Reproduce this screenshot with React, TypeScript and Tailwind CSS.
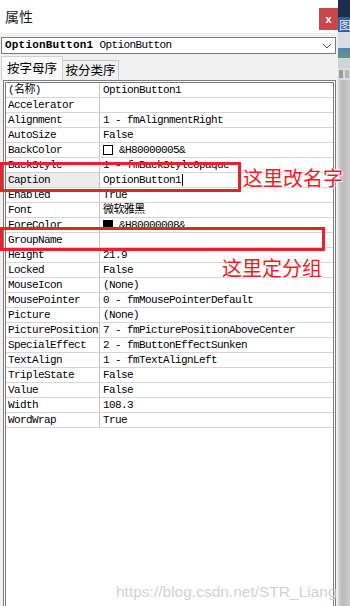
import { ReactElement } from 'react';

type Row = { name: string; value: string; swatch?: 'white' | 'black'; selected?: boolean };

const rows: Row[] = [
  { name: '(名称)', value: 'OptionButton1' },
  { name: 'Accelerator', value: '' },
  { name: 'Alignment', value: '1 - fmAlignmentRight' },
  { name: 'AutoSize', value: 'False' },
  { name: 'BackColor', value: '&H80000005&', swatch: 'white' },
  { name: 'BackStyle', value: '1 - fmBackStyleOpaque' },
  { name: 'Caption', value: 'OptionButton1', selected: true },
  { name: 'Enabled', value: 'True' },
  { name: 'Font', value: '微软雅黑' },
  { name: 'ForeColor', value: '&H80000008&', swatch: 'black' },
  { name: 'GroupName', value: '' },
  { name: 'Height', value: '21.9' },
  { name: 'Locked', value: 'False' },
  { name: 'MouseIcon', value: '(None)' },
  { name: 'MousePointer', value: '0 - fmMousePointerDefault' },
  { name: 'Picture', value: '(None)' },
  { name: 'PicturePosition', value: '7 - fmPicturePositionAboveCenter' },
  { name: 'SpecialEffect', value: '2 - fmButtonEffectSunken' },
  { name: 'TextAlign', value: '1 - fmTextAlignLeft' },
  { name: 'TripleState', value: 'False' },
  { name: 'Value', value: 'False' },
  { name: 'Width', value: '108.3' },
  { name: 'WordWrap', value: 'True' },
];

const mono = "font-['Liberation_Mono','Noto_Sans_CJK_SC',monospace] text-[11px] tracking-[-0.6px]";

function PropRow({ row }: { row: Row }): ReactElement {
  return (
    <div className="flex h-[15px] border-b border-[#d6d6d6] leading-[14px] text-black">
      <div
        className={`w-[94px] shrink-0 border-r border-[#c4c4c4] pl-[2px] ${mono} ${
          row.selected ? 'bg-[#ececec]' : ''
        }`}
      >
        {row.name}
      </div>
      <div className={`flex flex-1 items-center pl-[3px] ${mono}`}>
        {row.swatch && (
          <span
            className={`mr-[6px] inline-block h-[10px] w-[10px] border border-black ${
              row.swatch === 'black' ? 'bg-black' : 'bg-white'
            }`}
          />
        )}
        <span>{row.value}</span>
        {row.selected && <span className="ml-[1px] inline-block h-[12px] w-px bg-black" />}
      </div>
    </div>
  );
}

export default function App(): ReactElement {
  return (
    <div className="relative flex h-[606px] w-[350px] overflow-hidden bg-white">
      {/* properties window */}
      <div className="flex w-[338px] shrink-0 flex-col bg-[#f0f0f0]">
        <div className="flex h-[33px] items-start justify-between bg-white">
          <span className="mt-[7px] ml-[5px] font-['Noto_Sans_CJK_SC',sans-serif] text-[14px] leading-[18px] text-[#1a1a1a]">
            属性
          </span>
          <div className="mt-[8px] flex h-[22px] w-[19px] items-center justify-center bg-[#c7484b] font-['Liberation_Sans',sans-serif] text-[11px] font-bold leading-none text-white">
            x
          </div>
        </div>

        <div className="mt-[4px] ml-[1px] mr-[2px] flex h-[17px] items-center border border-[#7a7a7a] bg-white pl-[3px]">
          <span className="font-['Liberation_Mono',monospace] text-[11px] font-bold tracking-[0.2px] text-black">
            OptionButton1
          </span>
          <span className="ml-[6px] font-['Liberation_Mono',monospace] text-[11px] tracking-[-0.6px] text-black">
            OptionButton
          </span>
          <svg className="ml-auto mr-[3px]" width="10" height="6" viewBox="0 0 10 6">
            <path d="M1 1 L5 5 L9 1" stroke="#555" strokeWidth="1" fill="none" />
          </svg>
        </div>

        <div className="mt-[2px] flex h-[24px] items-end pl-[1px]">
          <div className="flex h-[24px] w-[62px] items-center justify-center border border-b-0 border-[#d0d0d0] bg-[#f9f9f9] font-['Noto_Sans_CJK_SC',sans-serif] text-[12.5px] text-black">
            按字母序
          </div>
          <div className="flex h-[20px] w-[56px] items-center justify-center border border-b-0 border-l-0 border-[#c8c8c8] bg-[#f0f0f0] font-['Noto_Sans_CJK_SC',sans-serif] text-[12.5px] text-black">
            按分类序
          </div>
        </div>

        <div className="ml-[3px] mr-[2px] flex-1 border-[3px] border-b-0 border-double border-[#7c7c7c] bg-white">
          {rows.map((r) => (
            <PropRow key={r.name} row={r} />
          ))}
        </div>
      </div>

      {/* desktop behind the window */}
      <div className="flex flex-1 flex-col">
        <div className="h-[17px] bg-[#1d2c4f]" />
        <div className="flex h-[15px] items-center overflow-hidden bg-[#2d5ea9] pl-[1px] font-['Noto_Sans_CJK_SC',sans-serif] text-[12px] leading-none text-[#e8eef8]">
          图
        </div>
        <div className="h-[16px] bg-[#d9dee6]" />
        <div className="h-[10px] bg-[linear-gradient(#5a7fb8,#5d9a7a)]" />
        <div className="h-[10px] bg-[#cfd3d8]" />
        <div className="flex h-[12px] gap-[2px] bg-[#dcdcdc] px-[1px] py-[2px]">
          <div className="w-[4px] bg-[#9a9a9a]" />
          <div className="w-[4px] bg-[#b5b5b5]" />
        </div>
        <div className="flex-1 bg-[linear-gradient(90deg,#d8d8d8,#b9b9b9_30%,#cfcfcf)]" />
      </div>

      {/* annotations */}
      <div className="absolute left-0 top-[162px] h-[30px] w-[241px] border-[3px] border-[#e8222b]" />
      <div className="absolute left-[243px] top-[166px] font-['Noto_Sans_CJK_SC',sans-serif] text-[20px] leading-[24px] text-[#ee1c25] [text-shadow:0_0_2px_#fff,1px_1px_1px_#fff,-1px_-1px_1px_#fff]">
        这里改名字
      </div>
      <div className="absolute left-0 top-[227px] h-[24px] w-[325px] border-[3px] border-[#e8222b]" />
      <div className="absolute left-[222px] top-[256px] font-['Noto_Sans_CJK_SC',sans-serif] text-[20px] leading-[24px] text-[#ee1c25] [text-shadow:0_0_2px_#fff,1px_1px_1px_#fff,-1px_-1px_1px_#fff]">
        这里定分组
      </div>
      <div className="absolute left-[116px] top-[582px] font-['Liberation_Sans',sans-serif] text-[15.5px] leading-[20px] text-[#d2d2d2]">
        https://blog.csdn.net/STR_Liang
      </div>
    </div>
  );
}
